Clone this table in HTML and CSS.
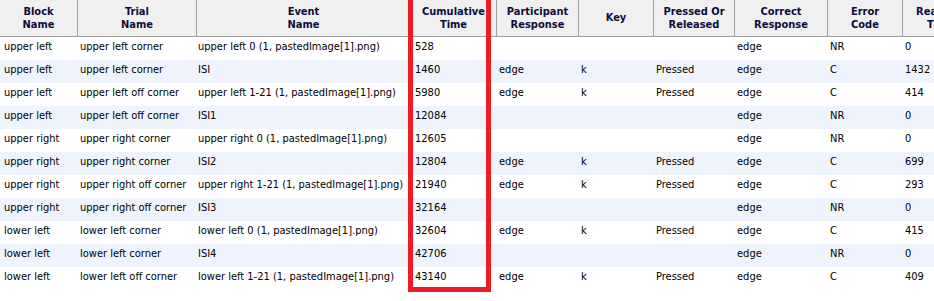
FILE: index.html
```html
<!DOCTYPE html>
<html>
<head>
<meta charset="utf-8">
<link rel="stylesheet" href="styles.css">
</head>
<body>
<div class="view">
  <div class="grid">
    <div class="hd c1">Block<br>Name</div>
    <div class="hd">Trial<br>Name</div>
    <div class="hd">Event<br>Name</div>
    <div class="hd">Cumulative<br>Time</div>
    <div class="hd">Participant<br>Response</div>
    <div class="hd">Key</div>
    <div class="hd">Pressed Or<br>Released</div>
    <div class="hd">Correct<br>Response</div>
    <div class="hd">Error<br>Code</div>
    <div class="hd">Reaction<br>Time</div>
  </div>
  <div id="rows"></div>
  <div class="highlight"></div>
</div>
<script src="app.js"></script>
</body>
</html>
```

FILE: app.js
```js
const data = [
  ["upper left","upper left corner","upper left 0 (1, pastedImage[1].png)","528","","","","edge","NR","0"],
  ["upper left","upper left corner","ISI","1460","edge","k","Pressed","edge","C","1432"],
  ["upper left","upper left off corner","upper left 1-21 (1, pastedImage[1].png)","5980","edge","k","Pressed","edge","C","414"],
  ["upper left","upper left off corner","ISI1","12084","","","","edge","NR","0"],
  ["upper right","upper right corner","upper right 0 (1, pastedImage[1].png)","12605","","","","edge","NR","0"],
  ["upper right","upper right corner","ISI2","12804","edge","k","Pressed","edge","C","699"],
  ["upper right","upper right off corner","upper right 1-21 (1, pastedImage[1].png)","21940","edge","k","Pressed","edge","C","293"],
  ["upper right","upper right off corner","ISI3","32164","","","","edge","NR","0"],
  ["lower left","lower left corner","lower left 0 (1, pastedImage[1].png)","32604","edge","k","Pressed","edge","C","415"],
  ["lower left","lower left corner","ISI4","42706","","","","edge","NR","0"],
  ["lower left","lower left off corner","lower left 1-21 (1, pastedImage[1].png)","43140","edge","k","Pressed","edge","C","409"]
];
const host = document.getElementById("rows");
data.forEach((r, i) => {
  const row = document.createElement("div");
  row.className = "grid row" + (i % 2 ? " alt" : "");
  r.forEach((v, j) => {
    const c = document.createElement("div");
    c.className = "td t" + (j + 1);
    c.textContent = v;
    row.appendChild(c);
  });
  host.appendChild(row);
});
```

FILE: styles.css
```css
html, body {
  margin: 0;
  padding: 0;
  background: #fff;
}
body {
  font-family: "DejaVu Sans Condensed", "DejaVu Sans", sans-serif;
  font-size: 11px;
  color: #000;
}
.view {
  position: relative;
  width: 934px;
  height: 301px;
  overflow: hidden;
}
.grid {
  display: grid;
  grid-template-columns: 78px 119px 214px 86px 82px 75px 81px 93px 75px 76px;
  width: 979px;
}
.hd {
  height: 36px;
  background: #f0f0f0;
  border-right: 1px solid #a0a0a0;
  border-bottom: 1px solid #a0a0a0;
  display: flex;
  align-items: center;
  justify-content: center;
  text-align: center;
  font-weight: bold;
  line-height: 13px;
  padding-bottom: 1px;
  box-sizing: border-box;
  height: 37px;
  color: #0c0c3c;
}
.hd.c1 {
  border-left: 1px solid #a0a0a0;
  margin-left: -1px;
}
.row {
  height: 23px;
  background: #fff;
}
.row.alt {
  background: #eff4fc;
}
.td {
  display: flex;
  align-items: center;
  padding: 0 0 4px 2px;
  white-space: nowrap;
  overflow: hidden;
}
.td.t1 { padding-left: 4px; }
.td.t2 { padding-left: 2px; }
.td.t3 { padding-left: 1px; }
.td.t4 { padding-left: 4px; }
.highlight {
  position: absolute;
  left: 408px;
  top: -5px;
  width: 73px;
  height: 287px;
  border: 5px solid #ed1c24;
}
```
